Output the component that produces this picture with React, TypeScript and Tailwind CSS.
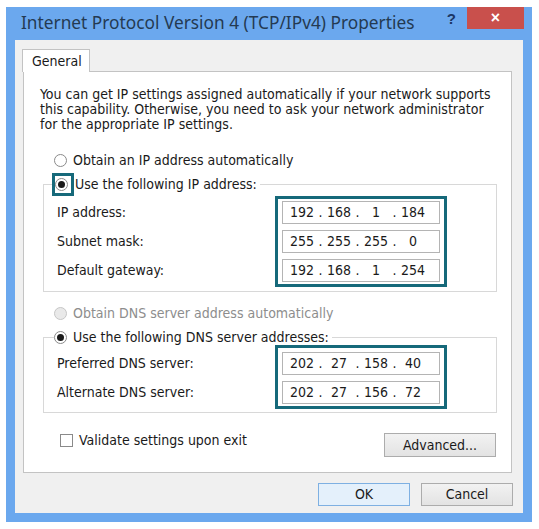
import React from 'react';

const bodyFont = "font-['DejaVu_Sans_Condensed','DejaVu_Sans',sans-serif] text-[14px] text-[#1a1a1a]";

function Radio({ checked = false, disabled = false }: { checked?: boolean; disabled?: boolean }) {
  return (
    <span
      className={`flex h-[13px] w-[13px] shrink-0 items-center justify-center rounded-full border ${
        disabled ? 'border-[#c6c6c6] bg-[#e9e9e9]' : 'border-[#8a8a8a] bg-white'
      }`}
    >
      {checked && <span className="h-[7px] w-[7px] rounded-full bg-[#1a1a1a]" />}
    </span>
  );
}

// IP address control: four centred fields with dots between
function IpField({ parts }: { parts: string[] }) {
  return (
    <div className="flex h-[23px] w-[158px] items-center border border-[#b4b4b4] bg-white pl-[4px]">
      {parts.map((p, i) => (
        <React.Fragment key={i}>
          <span className="w-[30px] text-center">{p}</span>
          {i < 3 && <span className="w-[7px] text-center">.</span>}
        </React.Fragment>
      ))}
    </div>
  );
}

function AddressGroup({
  labels,
  values,
  padTop,
}: {
  labels: string[];
  values: string[][];
  padTop: 'pt-[2px]' | 'pt-[4px]';
}) {
  return (
    <div className="flex pl-[13px]">
      <div className={`flex w-[218px] flex-col gap-[6px] ${padTop === 'pt-[2px]' ? 'pt-[5px]' : 'pt-[7px]'}`}>
        {labels.map((l) => (
          <div key={l} className="flex h-[23px] items-center">
            {l}
          </div>
        ))}
      </div>
      <div className={`flex flex-col gap-[6px] border-[3px] border-[#16697a] px-[4px] pb-[2px] ${padTop}`}>
        {values.map((v, i) => (
          <IpField key={i} parts={v} />
        ))}
      </div>
    </div>
  );
}

export default function App() {
  return (
    <div className="h-[529px] bg-white pl-[6px] pt-[7px]">
      <div className="flex w-[526px] flex-col bg-[#6ba8ee] px-[9px] pb-[9px]">
        {/* title bar */}
        <div className="flex h-[33px] items-start">
          <div className="flex-1 whitespace-nowrap pl-[6px] pt-[4px] font-['Noto_Sans',sans-serif] text-[17.3px] leading-[24px] text-[#243a52]">
            Internet Protocol Version 4 (TCP/IPv4) Properties
          </div>
          <div className="mr-[11px] pt-[1px] font-['Liberation_Sans',sans-serif] text-[15px] font-bold leading-[22px] text-[#1b3764]">
            ?
          </div>
          <div className="-mr-px flex h-[22px] w-[57px] items-center justify-center bg-[#c9504c] font-['Liberation_Sans',sans-serif] text-[16px] font-bold leading-none text-white">
            ×
          </div>
        </div>

        {/* client area */}
        <div className={`flex flex-col bg-[#f0f0f0] pb-[7px] pl-[7px] pr-[11px] pt-[9px] ${bodyFont}`}>
          <div className="relative z-10 -mb-px flex h-[23px] w-[68px] items-center border border-b-0 border-[#c3c3c3] bg-white pl-[9px]">
            General
          </div>

          <div className="ml-[1px] flex flex-col border border-[#c3c3c3] bg-white pb-[15px] pl-[16px] pr-[14px] pt-[15px]">
            <p className="whitespace-nowrap leading-[15px]">
              You can get IP settings assigned automatically if your network supports
              <br />
              this capability. Otherwise, you need to ask your network administrator
              <br />
              for the appropriate IP settings.
            </p>

            <div className="ml-[14px] mt-[20px] flex h-[16px] items-center gap-[6px]">
              <Radio />
              <span>Obtain an IP address automatically</span>
            </div>

            <fieldset className="ml-[3px] mt-[5px] border border-[#d8d8d8] pb-[4px]">
              <legend className="ml-[8px] pr-[3px]">
                <div className="flex h-[23px] items-center">
                  <span className="flex h-[23px] w-[22px] items-center border-[3px] border-[#16697a]">
                    <Radio checked />
                  </span>
                  <span className="ml-[1px]">Use the following IP address:</span>
                </div>
              </legend>
              <AddressGroup
                labels={['IP address:', 'Subnet mask:', 'Default gateway:']}
                values={[
                  ['192', '168', '1', '184'],
                  ['255', '255', '255', '0'],
                  ['192', '168', '1', '254'],
                ]}
                padTop="pt-[2px]"
              />
            </fieldset>

            <div className="ml-[14px] mt-[13px] flex h-[16px] items-center gap-[6px] text-[#8d8d8d]">
              <Radio disabled />
              <span>Obtain DNS server address automatically</span>
            </div>

            <fieldset className="ml-[3px] mt-[8px] border border-[#d8d8d8] pb-[3px]">
              <legend className="ml-[10px] pr-[3px]">
                <div className="flex h-[16px] items-center gap-[6px]">
                  <Radio checked />
                  <span>Use the following DNS server addresses:</span>
                </div>
              </legend>
              <AddressGroup
                labels={['Preferred DNS server:', 'Alternate DNS server:']}
                values={[
                  ['202', '27', '158', '40'],
                  ['202', '27', '156', '72'],
                ]}
                padTop="pt-[4px]"
              />
            </fieldset>

            <div className="mt-[19px] flex items-start justify-between">
              <div className="ml-[20px] flex h-[16px] items-center gap-[6px]">
                <span className="h-[13px] w-[13px] border border-[#8a8a8a] bg-white" />
                <span>Validate settings upon exit</span>
              </div>
              <button className="mr-[1px] mt-[1px] flex h-[24px] w-[112px] items-center justify-center border border-[#acacac] bg-linear-to-b from-[#f2f2f2] to-[#e3e3e3]">
                Advanced...
              </button>
            </div>
          </div>

          <div className="-mr-px mt-[10px] flex justify-end gap-[11px]">
            <button className="flex h-[23px] w-[92px] items-center justify-center border border-[#7eb0e2] bg-[#e4f0fb]">
              OK
            </button>
            <button className="flex h-[23px] w-[92px] items-center justify-center border border-[#acacac] bg-linear-to-b from-[#f2f2f2] to-[#e3e3e3]">
              Cancel
            </button>
          </div>
        </div>
      </div>
    </div>
  );
}
